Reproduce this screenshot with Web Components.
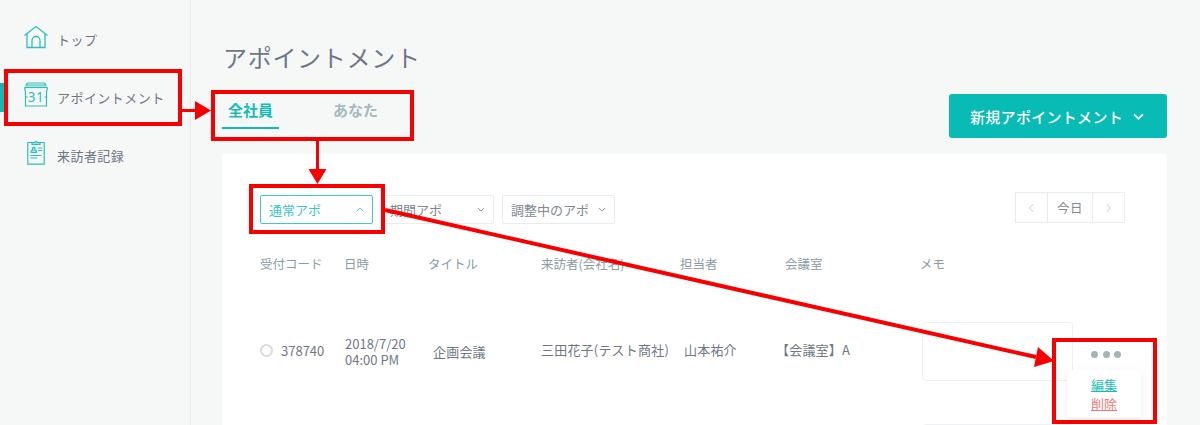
<!DOCTYPE html>
<html lang="ja">
<head>
<meta charset="utf-8">
<title>アポイントメント</title>
<style>
  html, body { margin: 0; height: 100%; overflow: hidden; }
  body {
    position: relative;
    width: 1200px;
    height: 425px;
    background: #f6f8f8;
    font-family: "Noto Sans CJK JP", "Noto Sans", sans-serif;
    color: #6b7384;
  }
</style>
</head>
<body>
<app-shell>
  <side-nav slot="side">
    <nav-item icon="home">トップ</nav-item>
    <nav-item icon="calendar" active>アポイントメント</nav-item>
    <nav-item icon="clipboard">来訪者記録</nav-item>
  </side-nav>
  <page-header slot="head" title="アポイントメント"></page-header>
  <appt-card slot="body"></appt-card>
</app-shell>
<red-marks></red-marks>

<script>
const ICONS = {
  home: `<svg width="26" height="24" viewBox="0 0 26 24" fill="none" stroke="#2cc0ba" stroke-width="1.3">
      <path d="M1.500 10.500 13 1.500l11.500 9"/><path d="M4 8.500v14h18v-14"/>
      <path d="M9 22.500v-7a4 4 0 0 1 8 0v7"/></svg>`,
  calendar: `<svg width="26" height="26" viewBox="0 0 26 26" fill="none" stroke="#2cc0ba" stroke-width="1.2">
      <path d="M3 4.500Q3 1 6 1h14q3 0 3 3.500"/><path d="M1.500 5.500h23"/><path d="M4 3.300h18" stroke-width="2.500" opacity=".55"/>
      <path d="M1.500 5.500l1 4.500v14h21V10l1-4.500"/>
      <path d="M2.500 15h2M21.500 15h2"/>
      <text x="13" y="20" font-family="Noto Sans" font-size="13.500" fill="#2cc0ba" stroke="none" text-anchor="middle">31</text></svg>`,
  clipboard: `<svg width="18" height="25" viewBox="0 0 18 25" fill="none" stroke="#2cc0ba" stroke-width="1.2">
      <path d="M5 2.500H.8v21.700h16.400V2.500H13"/><path d="M5 4.500V2.500h2.500a1.700 1.700 0 0 1 3 0H13v2z" fill="#9fe2df"/>
      <path d="M4 12.500h5.500v-1.500l-1.500-1V8.200a1.300 1.300 0 0 0-2.500 0V10l-1.500 1z" fill="#9fe2df"/>
      <path d="M11 8h4M11 10.500h4M3.500 15.500h11M3.500 18h7"/></svg>`
};

const chevron = (up, color, w = 8, sw = 1.2) => `<svg width="${w}" height="${Math.round(w * .6)}" viewBox="0 0 10 6" fill="none" stroke="${color}" stroke-width="${sw}">
  <path d="${up ? 'M1 5l4-4 4 4' : 'M1 1l4 4 4-4'}"/></svg>`;

class AppShell extends HTMLElement {
  constructor() {
    super();
    this.attachShadow({ mode: 'open' }).innerHTML = `
      <style>
        :host { display: flex; width: 1200px; height: 425px; overflow: hidden; }
        .side { flex: 0 0 190px; border-right: 1px solid #e8ebeb; padding-top: 10px; }
        main { flex: 1; padding: 0 33px 0 31px; min-width: 0; }
      </style>
      <div class="side"><slot name="side"></slot></div>
      <main>
        <slot name="head"></slot>
        <slot name="body"></slot>
      </main>`;
  }
}

class SideNav extends HTMLElement {
  constructor() {
    super();
    this.attachShadow({ mode: 'open' }).innerHTML = `
      <style>:host { display: flex; flex-direction: column; }</style><slot></slot>`;
  }
}

class NavItem extends HTMLElement {
  constructor() {
    super();
    this.attachShadow({ mode: 'open' });
  }
  connectedCallback() {
    const active = this.hasAttribute('active');
    this.shadowRoot.innerHTML = `
      <style>
        :host {
          display: flex; align-items: center; position: relative;
          height: 58px; padding-left: 23px; gap: 8px;
          font-size: 13px; letter-spacing: .45px; color: #6d7483;
        }
        .ic { flex: 0 0 26px; display: flex; justify-content: center; margin-top: -5px; }
        .bar { position: absolute; left: 0; top: 15px; width: 4px; height: 29px; background: #0fbab4; box-shadow: 0 0 6px #8fe0dc; }
        .line { position: absolute; left: 8px; top: 53px; width: 162px; height: 1px; background: #fff; }
      </style>
      ${active ? '<span class="bar"></span><span class="line"></span>' : ''}
      <span class="ic">${ICONS[this.getAttribute('icon')]}</span>
      <slot></slot>`;
  }
}

class PageHeader extends HTMLElement {
  constructor() {
    super();
    this.attachShadow({ mode: 'open' });
  }
  connectedCallback() {
    this.shadowRoot.innerHTML = `
      <style>
        :host { display: block; }
        h1 { margin: 0 0 0 1px; padding-top: 39px; height: 49px; font-size: 24px; line-height: 36px; font-weight: 400; letter-spacing: .7px; color: #6f7785; }
        .row { display: flex; justify-content: space-between; height: 66px; }
        .tabs { display: flex; height: 39px; font-size: 15px; font-weight: 700; line-height: 44px; white-space: nowrap; }
        .tab { padding: 0 6px; width: 45px; color: #a6b9bc; }
        .tab.on { color: #14bcb5; border-bottom: 2.500px solid #0fbab4; margin-right: 43px; height: 39px; }
        .tab + .tab { margin-left: 5px; }
        .new {
          display: flex; align-items: center; gap: 10px; box-sizing: border-box;
          width: 218px; height: 44px; padding-left: 21px; margin-top: 6px;
          background: #08bbb4; color: #fff; border-radius: 3px;
          font-size: 15px; font-weight: 500; letter-spacing: .3px;
        }
      </style>
      <h1>${this.getAttribute('title')}</h1>
      <div class="row">
        <div class="tabs"><div class="tab on">全社員</div><div class="tab">あなた</div></div>
        <div class="new">新規アポイントメント ${chevron(false, '#fff', 11, 1.6)}</div>
      </div>`;
  }
}

class FilterSelect extends HTMLElement {
  constructor() {
    super();
    this.attachShadow({ mode: 'open' });
  }
  connectedCallback() {
    const open = this.hasAttribute('open');
    this.shadowRoot.innerHTML = `
      <style>
        :host {
          display: flex; align-items: center; justify-content: space-between; box-sizing: border-box;
          height: 29px; padding: 0 8px; border-radius: 2px; font-size: 13px;
          border: 1px solid ${open ? '#3ecbc5' : '#e9ecee'}; color: ${open ? '#3cc6c0' : '#7f8791'};
          width: ${this.getAttribute('w')}px;
        }
      </style>
      <slot></slot>${chevron(open, open ? '#3cc6c0' : '#8a929b')}`;
  }
}

class DayPager extends HTMLElement {
  constructor() {
    super();
    this.attachShadow({ mode: 'open' }).innerHTML = `
      <style>
        :host { display: flex; height: 31px; box-sizing: border-box; border: 1px solid #e9ebee; font-size: 12.500px; color: #7f8791; }
        div { display: flex; align-items: center; justify-content: center; }
        .a { width: 31px; } .t { width: 46px; border-left: 1px solid #e9ebee; border-right: 1px solid #e9ebee; box-sizing: border-box; letter-spacing: .5px; }
      </style>
      <div class="a"><svg width="7" height="10" viewBox="0 0 7 10" fill="none" stroke="#dfe3e6" stroke-width="1.300"><path d="M5.500 1l-4 4 4 4"/></svg></div>
      <div class="t">今日</div>
      <div class="a"><svg width="7" height="10" viewBox="0 0 7 10" fill="none" stroke="#dfe3e6" stroke-width="1.300"><path d="M1.500 1l4 4-4 4"/></svg></div>`;
  }
}

class ActionMenu extends HTMLElement {
  constructor() {
    super();
    this.attachShadow({ mode: 'open' }).innerHTML = `
      <style>
        :host { display: block; position: absolute; left: 845px; top: 216px; width: 74px; height: 47px; box-sizing: border-box;
          padding-top: 5px; background: #fff; border-radius: 3px; box-shadow: 0 3px 10px rgba(90,110,110,.13);
          text-align: center; font-size: 13px; line-height: 19px; }
        a { display: block; text-decoration: underline; }
        .e { color: #1cbdb6; } .d { color: #ec7a74; }
      </style>
      <a class="e">編集</a><a class="d">削除</a>`;
  }
}

class ApptCard extends HTMLElement {
  constructor() {
    super();
    this.attachShadow({ mode: 'open' }).innerHTML = `
      <style>
        :host { display: block; position: relative; height: 271px; background: #fff; border-radius: 3px 3px 0 0; padding: 38px 42px 0 38px; box-sizing: border-box; }
        .bar { display: flex; justify-content: space-between; align-items: flex-start; height: 57px; }
        .filters { display: flex; gap: 8px; margin-top: 3px; }
        .cols { display: grid; grid-template-columns: 84px 84px 113px 139px 105px 135px 1fr; }
        .head { font-size: 12.500px; line-height: 18px; color: #8b9ca1; height: 55px; padding-top: 6px; box-sizing: border-box; }
        .row { font-size: 13px; letter-spacing: .2px; color: #6f7785; align-items: center; height: 90px; }
        .code { display: flex; align-items: center; gap: 8px; letter-spacing: 0; margin-top: 2px; }
        .radio { flex: none; width: 9px; height: 9px; border: 2px solid #d9dcdc; border-radius: 50%; }
        .dt { line-height: 16px; padding-left: 1px; margin-top: 6px; letter-spacing: 0; }
        .t { padding-left: 5px; margin-top: 4px; }
        .v { white-space: nowrap; }
        .p { padding-left: 4px; }
        .room { margin-left: -9px; }
        .memo { position: absolute; left: 700px; top: 168px; width: 151px; height: 59px; box-sizing: border-box; border: 1px solid #eef2f6; border-radius: 4px; }
        .memo.next { top: 270px; }
        .dots { position: absolute; left: 869px; top: 197px; display: flex; gap: 4.700px; }
        .dots i { width: 7px; height: 7px; border-radius: 50%; background: #a3b4b9; }
      </style>
      <div class="bar">
        <div class="filters">
          <filter-select w="113" open>通常アポ</filter-select>
          <filter-select w="113">期間アポ</filter-select>
          <filter-select w="113">調整中のアポ</filter-select>
        </div>
        <day-pager></day-pager>
      </div>
      <div class="cols head">
        <div>受付コード</div><div>日時</div><div>タイトル</div><div>来訪者(会社名)</div><div>担当者</div><div>会議室</div><div>メモ</div>
      </div>
      <div class="cols row">
        <div class="code"><span class="radio"></span>378740</div>
        <div class="dt">2018/7/20<br>04:00 PM</div>
        <div class="t">企画会議</div>
        <div class="v">三田花子(テスト商社)</div>
        <div class="p">山本祐介</div>
        <div class="room">【会議室】A</div>
        <div></div>
      </div>
      <div class="memo"></div><div class="memo next"></div>
      <div class="dots"><i></i><i></i><i></i></div>
      <action-menu></action-menu>`;
  }
}

class RedMarks extends HTMLElement {
  constructor() {
    super();
    this.attachShadow({ mode: 'open' }).innerHTML = `
      <style>
        :host { position: absolute; left: 0; top: 0; width: 1200px; height: 425px; pointer-events: none; }
        svg { display: block; }
      </style>
      <svg width="1200" height="425" fill="none" stroke="#f90000" stroke-width="4">
        <rect x="6" y="71" width="174" height="53"/>
        <rect x="213" y="92" width="199" height="47"/>
        <rect x="251" y="186" width="132" height="46"/>
        <rect x="1054" y="340" width="101" height="82"/>
        <path d="M182 110.500h16" stroke-width="3"/>
        <path d="M195 101v19l16-9.500z" fill="#f90000" stroke="none"/>
        <path d="M317.500 141v29" stroke-width="3"/>
        <path d="M308.500 169h18l-9 15z" fill="#f90000" stroke="none"/>
        <path d="M385 210 1036 357"/>
        <path d="M1038 347 1054 361 1034 367z" fill="#f90000" stroke="none"/>
      </svg>`;
  }
}

customElements.define('app-shell', AppShell);
customElements.define('side-nav', SideNav);
customElements.define('nav-item', NavItem);
customElements.define('page-header', PageHeader);
customElements.define('filter-select', FilterSelect);
customElements.define('day-pager', DayPager);
customElements.define('action-menu', ActionMenu);
customElements.define('appt-card', ApptCard);
customElements.define('red-marks', RedMarks);
</script>
</body>
</html>
